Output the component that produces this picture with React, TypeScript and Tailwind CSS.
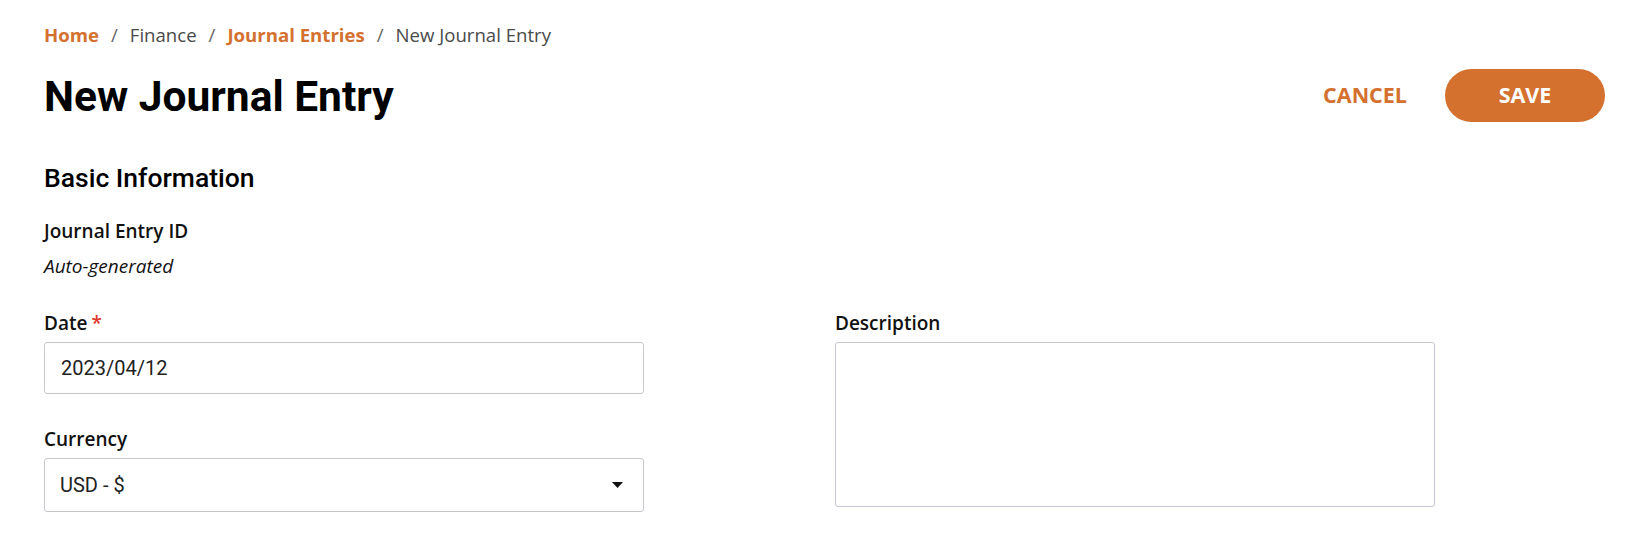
import React from 'react';

const crumbs = [
  { title: 'Home', link: true },
  { title: 'Finance', link: false },
  { title: 'Journal Entries', link: true },
  { title: 'New Journal Entry', link: false },
];

const body = { fontFamily: '"Open Sans", "Noto Sans", sans-serif' };
const roboto = { fontFamily: 'Roboto, "Liberation Sans", sans-serif' };

const Label: React.FC<{ text: string; required?: boolean }> = ({ text, required }) => (
  <div className="text-[19px] leading-[27px] font-semibold text-[#111] mb-[5px]" style={body}>
    {text}
    {required && <span className="text-[#e0352b] ml-1">*</span>}
  </div>
);

const App: React.FC = () => {
  return (
    <div className="min-h-[536px] bg-white pl-[44px] pr-[29px] pt-[21px]">
      <nav className="flex items-center text-[18.6px] leading-[27px]" style={body}>
        {crumbs.map((c, i) => (
          <React.Fragment key={c.title}>
            {i > 0 && <span className="mx-[12px] text-[#666]">/</span>}
            <span className={c.link ? 'font-bold text-[#d4712f]' : 'text-[#4a4a4a]'}>{c.title}</span>
          </React.Fragment>
        ))}
      </nav>

      <div className="flex items-center justify-between mt-[21px]">
        <h1 className="text-[42.5px] leading-[50px] font-bold text-black pt-[2px]" style={roboto}>
          New Journal Entry
        </h1>
        <div className="flex items-center" style={body}>
          <button className="text-[21.5px] font-bold text-[#d4712f] px-[16px] mr-[22px]">CANCEL</button>
          <button className="w-[160px] h-[53px] rounded-full bg-[#d4712f] text-white text-[21.5px] font-bold">
            SAVE
          </button>
        </div>
      </div>

      <h2 className="mt-[40px] text-[26.5px] leading-[32px] font-medium text-black" style={roboto}>
        Basic Information
      </h2>

      <div className="mt-[24px]">
        <div className="text-[19px] leading-[27px] font-semibold text-[#111]" style={body}>
          Journal Entry ID
        </div>
        <div className="mt-[8px] text-[19px] leading-[27px] italic text-[#111]" style={body}>
          Auto-generated
        </div>
      </div>

      <div className="mt-[30px] grid grid-cols-[600px_600px] gap-x-[191px]">
        <div>
          <Label text="Date" required />
          <div
            className="h-[52px] w-full border border-[#c6c6cc] rounded-[3px] flex items-center px-[16px] text-[20px] text-[#222]"
            style={roboto}
          >
            2023/04/12
          </div>
          <div className="mt-[32px]">
            <Label text="Currency" />
            <div
              className="h-[54px] w-full border border-[#c6c6cc] rounded-[3px] flex items-center justify-between pl-[15px] pr-[20px] text-[20px] text-[#222]"
              style={roboto}
            >
              <span>USD - $</span>
              <svg width="11" height="6" viewBox="0 0 11 6">
                <path d="M0 0h11L5.5 6z" fill="#111" />
              </svg>
            </div>
          </div>
        </div>
        <div>
          <Label text="Description" />
          <div className="h-[165px] w-full border border-[#c8c6d4] rounded-[3px]" />
        </div>
      </div>
    </div>
  );
};

export default App;
